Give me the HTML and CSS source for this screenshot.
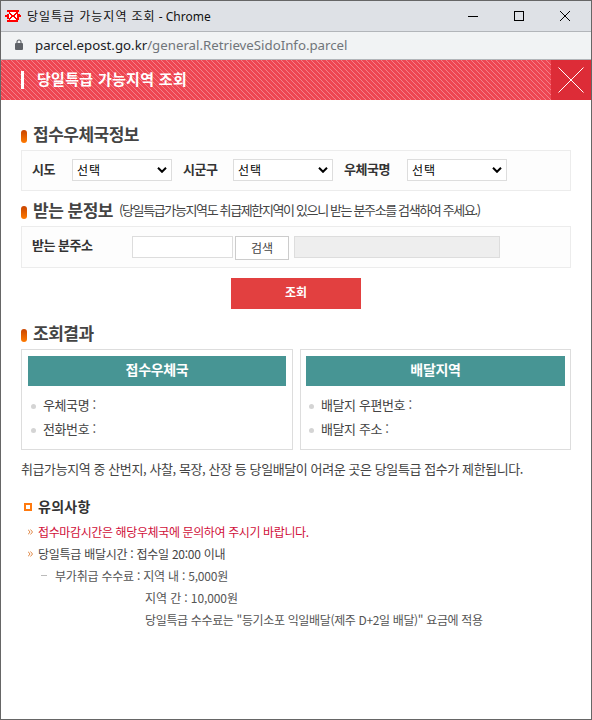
FILE: index.html
```html
<!DOCTYPE html>
<html lang="ko">
<head>
<meta charset="UTF-8">
<meta name="viewport" content="width=device-width, initial-scale=1.0">
<title>당일특급 가능지역 조회</title>
<link rel="stylesheet" href="styles.css">
</head>
<body>
<div class="window">
    <div class="titlebar">
        <svg class="favicon" width="16" height="13" viewBox="0 0 16 13" shape-rendering="crispEdges">
            <path d="M2 0h12v2h-1v2h2v1h1v2h-2v3h-1v2H2v-2h2V9H2V7H0V5h2V4h2V2H2z" fill="#f00"/>
            <path d="M5 2h6v1h-1v1H9v1H7V4H6V3H5zM4 4h1v1h1v2H5v1H4zM11 4h1v4h-1V7h-1V5h1zM7 7h2v1h1v1h1v1H5V9h1V8h1z" fill="#fff"/>
        </svg>
        <span class="title"><span>당일특급 가능지역 조회</span> - Chrome</span>
        <svg class="controls" width="106" height="12" viewBox="0 0 106 12">
            <path d="M0 6.5h10" stroke="#000"/>
            <rect x="46.5" y="1.5" width="9" height="9" fill="none" stroke="#000"/>
            <path d="M92 1l10 10M102 1l-10 10" stroke="#000" fill="none"/>
        </svg>
    </div>
    <div class="addressbar">
        <svg class="lock" width="8" height="11" viewBox="0 0 8 11">
            <path d="M2 5V3a2 2 0 0 1 4 0v2" fill="none" stroke="#5f6368" stroke-width="1.1"/>
            <rect x="0" y="4" width="8" height="7" rx="1" fill="#5f6368"/>
        </svg>
        <span class="url"><b>parcel.epost.go.kr</b>/general.RetrieveSidoInfo.parcel</span>
    </div>

    <div class="header">
        <h1>당일특급 가능지역 조회</h1>
        <button type="button" class="close">
            <svg width="26" height="26" viewBox="0 0 26 26"><path d="M.5.5l25 25M25.5.5l-25 25" stroke="#fff" fill="none"/></svg>
        </button>
    </div>

    <div class="content">
        <h2>접수우체국정보</h2>
        <div class="box office">
            <label class="sido">시도</label>
            <div class="select">
                <select><option>선택</option></select>
                <svg width="10" height="6" viewBox="0 0 10 6"><path d="M1 .8l4 4 4-4" fill="none" stroke="#000" stroke-width="2"/></svg>
            </div>
            <label class="gungu">시군구</label>
            <div class="select">
                <select><option>선택</option></select>
                <svg width="10" height="6" viewBox="0 0 10 6"><path d="M1 .8l4 4 4-4" fill="none" stroke="#000" stroke-width="2"/></svg>
            </div>
            <label class="post">우체국명</label>
            <div class="select">
                <select><option>선택</option></select>
                <svg width="10" height="6" viewBox="0 0 10 6"><path d="M1 .8l4 4 4-4" fill="none" stroke="#000" stroke-width="2"/></svg>
            </div>
        </div>

        <h2>받는 분정보 <small>(당일특급가능지역도 취급제한지역이 있으니 받는 분주소를 검색하여 주세요.)</small></h2>
        <div class="box receiver">
            <label class="addr">받는 분주소</label>
            <input type="text" class="zip">
            <button type="button" class="search">검색</button>
            <input type="text" class="address" readonly>
        </div>

        <button type="button" class="submit">조회</button>

        <h2>조회결과</h2>
        <div class="results">
            <div class="result">
                <h3>접수우체국</h3>
                <ul>
                    <li>우체국명 :</li>
                    <li>전화번호 :</li>
                </ul>
            </div>
            <div class="result">
                <h3>배달지역</h3>
                <ul>
                    <li>배달지 우편번호 :</li>
                    <li>배달지 주소 :</li>
                </ul>
            </div>
        </div>
        <p class="limit">취급가능지역 중 산번지, 사찰, 목장, 산장 등 당일배달이 어려운 곳은 당일특급 접수가 제한됩니다.</p>

        <h4>유의사항</h4>
        <ul class="notes">
            <li class="red"><svg width="5" height="6" viewBox="0 0 5 6"><path d="M0 .5L2 3 0 5.5M2.5 .5l2 2.5-2 2.5" fill="none" stroke="#e08a4a"/></svg>접수마감시간은 해당우체국에 문의하여 주시기 바랍니다.</li>
            <li><svg width="5" height="6" viewBox="0 0 5 6"><path d="M0 .5L2 3 0 5.5M2.5 .5l2 2.5-2 2.5" fill="none" stroke="#e08a4a"/></svg>당일특급 배달시간 : 접수일 20:00 이내</li>
        </ul>
        <ul class="fees">
            <li class="dash">부가취급 수수료 : 지역 내 : 5,000원</li>
            <li>지역 간 : 10,000원</li>
            <li class="extra">당일특급 수수료는 "등기소포 익일배달(제주 D+2일 배달)" 요금에 적용</li>
        </ul>
    </div>
</div>
</body>
</html>
```
FILE: styles.css
```css
*,
*::before {
    box-sizing: border-box;
    margin: 0;
    padding: 0;
}

body {
    font-family: "Noto Sans CJK KR", "Noto Sans", sans-serif;
    font-size: 13px;
    color: #444;
    background: #fff;
}

ul {
    list-style: none;
}

.window {
    width: 592px;
    height: 720px;
    border: 1px solid #666;
    overflow: hidden;
}

/* browser frame */
.titlebar {
    display: flex;
    align-items: center;
    height: 31px;
    padding: 0 17px 0 4px;
    background: #dee1e6;
    border-bottom: 1px solid #b2b5b9;
}

.title {
    margin-left: 6px;
    padding-top: 1px;
    font-family: "Noto Sans", "Noto Sans CJK KR", sans-serif;
    font-size: 12px;
    line-height: 20px;
    color: #111;
    white-space: nowrap;
}

.title span {
    letter-spacing: 1px;
}

.controls {
    margin-left: auto;
}

.addressbar {
    display: flex;
    align-items: center;
    height: 28px;
    padding-left: 14px;
    background: #f1f3f4;
    border-bottom: 1px solid #b2b5b9;
}

.lock {
    margin-bottom: 2px;
}

.url {
    margin-left: 12px;
    padding-bottom: 1px;
    font-family: "Noto Sans", sans-serif;
    font-size: 13.25px;
    line-height: 20px;
    color: #70757a;
    white-space: nowrap;
}

.url b {
    font-weight: normal;
    color: #202124;
}

/* popup header */
.header {
    display: flex;
    justify-content: space-between;
    align-items: center;
    height: 40px;
    background: linear-gradient(45deg, #ee4652 43%, #f4808a 46%, #f4808a 54%, #ee4652 57%) 0 0 / 5px 5px;
}

.header h1 {
    margin-left: 20px;
    padding-left: 13px;
    border-left: 3px solid #fff;
    font-size: 15px;
    line-height: 15px;
    height: 18px;
    letter-spacing: 0.3px;
    color: #fff;
}

.close {
    display: flex;
    align-items: center;
    justify-content: center;
    width: 40px;
    height: 40px;
    border: 0;
    background: #dd2c37;
}

.content {
    padding: 17px 20px 0;
}

h2 {
    display: flex;
    align-items: center;
    height: 33px;
    font-size: 17px;
    letter-spacing: -0.5px;
    white-space: nowrap;
    color: #444;
}

h2::before {
    content: "";
    width: 6px;
    height: 13px;
    margin: 5px 6px 0 0;
    border-radius: 3px;
    background: linear-gradient(#c84400, #ff7a00);
}

h2 small {
    margin-left: 6px;
    font-size: 13px;
    font-weight: normal;
    letter-spacing: -1.37px;
}

.box {
    display: flex;
    align-items: center;
    width: 550px;
    height: 41px;
    padding: 0 10px;
    border: 1px solid #ececec;
    background: #fdfdfd;
}

.box label {
    font-weight: bold;
    line-height: 20px;
    letter-spacing: -0.5px;
    color: #333;
    white-space: nowrap;
    padding-bottom: 4px;
}

.office {
    margin-bottom: 2px;
}

.sido {
    width: 40px;
}

.gungu {
    width: 50px;
    margin-left: 11px;
}

.post {
    width: 63px;
    margin-left: 11px;
}

.select {
    display: grid;
    align-items: center;
    width: 100px;
    height: 22px;
    margin-bottom: 1px;
    border: 1px solid #ddd;
    background: #fff;
}

.select select,
.select svg {
    grid-area: 1 / 1;
}

.select select {
    appearance: none;
    padding: 0 4px 2px;
    border: 0;
    background: none;
    font-family: inherit;
    font-size: 12px;
    letter-spacing: 1px;
    color: #000;
}

.select svg {
    justify-self: end;
    margin-right: 4px;
}

.receiver {
    height: 42px;
}

.addr {
    width: 100px;
}

.box input {
    height: 22px;
    margin-bottom: 0;
    border: 1px solid #ddd;
    background: #fff;
}

.box .zip {
    width: 101px;
}

.search {
    width: 54px;
    height: 24px;
    margin: 2px 5px 0 2px;
    padding-bottom: 2px;
    border: 1px solid #ccc;
    background: #fff;
    font-family: inherit;
    font-size: 12px;
    color: #444;
}

.box .address {
    width: 206px;
    background: #eee;
}

.submit {
    display: block;
    width: 130px;
    height: 31px;
    margin: 10px auto 7px;
    padding-bottom: 4px;
    border: 0;
    background: #e24040;
    font-family: inherit;
    font-size: 12px;
    font-weight: bold;
    color: #fff;
}

.results {
    display: grid;
    grid-template-columns: 272px 271px;
    gap: 7px;
}

.result {
    height: 101px;
    padding: 6px 6px 0;
    border: 1px solid #ddd;
}

.result:nth-child(2) {
    padding-left: 5px;
    padding-right: 5px;
}

.result h3 {
    height: 30px;
    background: #479594;
    font-size: 14px;
    line-height: 27px;
    letter-spacing: -0.3px;
    text-align: center;
    color: #fff;
}

.result ul {
    padding: 6px 3px;
}

.result li {
    display: flex;
    align-items: center;
    height: 24px;
    font-size: 13px;
    letter-spacing: -0.4px;
}

.result li::before {
    content: "";
    width: 5px;
    height: 5px;
    margin: 5px 7px 0 0;
    border-radius: 50%;
    background: #d4d4d4;
}

.limit {
    height: 38px;
    line-height: 38px;
    letter-spacing: -0.41px;
    white-space: nowrap;
}

h4 {
    display: flex;
    align-items: center;
    height: 32px;
    padding: 4px 0 0 3px;
    font-size: 14px;
    letter-spacing: 0.3px;
    color: #333;
}

h4::before {
    content: "";
    width: 8px;
    height: 8px;
    margin: 2px 6px 0 0;
    border: 2px solid #ff7a0f;
}

.notes li {
    display: flex;
    align-items: center;
    height: 22px;
    padding-left: 7px;
    font-size: 12px;
    letter-spacing: -0.27px;
}

.notes svg {
    margin: 1px 5px 0 0;
}

.notes .red {
    letter-spacing: -0.38px;
    color: #d0103a;
}

.fees li {
    display: flex;
    align-items: center;
    height: 22px;
    padding-left: 124px;
    font-size: 12px;
    letter-spacing: -0.1px;
    color: #555;
    white-space: nowrap;
}

.fees .dash {
    padding-left: 20px;
    letter-spacing: -0.22px;
}

.fees .extra {
    letter-spacing: -0.35px;
}

.dash::before {
    content: "";
    width: 6px;
    height: 1px;
    margin-right: 8px;
    background: #bbb;
}
```
